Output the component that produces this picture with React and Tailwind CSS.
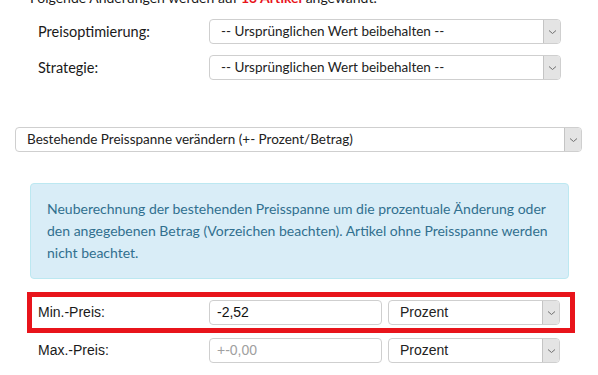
import React from 'react'

const sans = "font-['Lato','Liberation_Sans',sans-serif]"
const arial = "font-['Liberation_Sans',Arial,sans-serif]"

function Chevron() {
  return (
    <svg width="9" height="6" viewBox="0 0 9 6" fill="none">
      <path d="M1 1.5 L4.5 4.5 L8 1.5" stroke="#707070" strokeWidth="1" />
    </svg>
  )
}

function Select({ value, className = '', font = sans, size = 'text-[13.5px]' }) {
  return (
    <div className={`flex items-center h-[25px] border border-[#cfcfcf] rounded-[4px] bg-white overflow-hidden ${className}`}>
      <span className={`flex-1 pl-[11px] text-[#222] whitespace-nowrap ${size} ${font}`}>{value}</span>
      <span className="flex items-center justify-center w-[17px] h-full border-l border-[#c4c4c4] bg-[#e4e4e4]">
        <Chevron />
      </span>
    </div>
  )
}

function Input({ value, placeholder }) {
  return (
    <div className={`flex items-center w-[173px] h-[25px] border border-[#cfcfcf] rounded-[4px] bg-white pl-[7px] text-[14px] ${arial}`}>
      {value ? <span className="text-[#111]">{value}</span> : <span className="text-[#a0a0a0]">{placeholder}</span>}
    </div>
  )
}

export default function App() {
  return (
    <div className="w-[598px] h-[375px] overflow-hidden bg-white text-[#1a1a1a]">
      <p className={`-mt-[12px] pl-[30px] text-[14px] leading-[20px] whitespace-nowrap ${sans}`}>
        Folgende Änderungen werden auf <span className="font-bold text-[#e8141b]">13 Artikel</span> angewandt.
      </p>

      <div className="pl-[27px] mt-[11px] space-y-[11px]">
        <div className="flex items-center pl-[11px]">
          <span className={`w-[171px] text-[14.5px] ${sans}`}>Preisoptimierung:</span>
          <Select value="-- Ursprünglichen Wert beibehalten --" className="w-[352px]" />
        </div>
        <div className="flex items-center pl-[11px]">
          <span className={`w-[171px] text-[14.5px] ${sans}`}>Strategie:</span>
          <Select value="-- Ursprünglichen Wert beibehalten --" className="w-[352px]" />
        </div>
      </div>

      <div className="pl-[15px] mt-[47px]">
        <Select value="Bestehende Preisspanne verändern (+- Prozent/Betrag)" className="w-[567px] h-[24px]" />
      </div>

      <div className="ml-[30px] mt-[31px] w-[539px] border border-[#bce8f1] rounded-[4px] bg-[#d9edf7] px-[16px] py-[14px]">
        <p className={`text-[14px] leading-[22px] text-[#31708f] whitespace-nowrap ${sans}`}>
          Neuberechnung der bestehenden Preisspanne um die prozentuale Änderung oder
          <br />
          den angegebenen Betrag (Vorzeichen beachten). Artikel ohne Preisspanne werden
          <br />
          nicht beachtet.
        </p>
      </div>

      <div className="ml-[27px] mt-[13px] w-[548px] border-[5px] border-[#e8141b] py-[3px] pl-[6px] flex items-center">
        <span className={`w-[171px] text-[14px] ${arial}`}>Min.-Preis:</span>
        <Input value="-2,52" />
        <Select value="Prozent" font={arial} size="text-[14px]" className="ml-[6px] w-[172px]" />
      </div>

      <div className="ml-[27px] mt-[5px] pl-[11px] flex items-center">
        <span className={`w-[171px] text-[14px] ${arial}`}>Max.-Preis:</span>
        <Input placeholder="+-0,00" />
        <Select value="Prozent" font={arial} size="text-[14px]" className="ml-[6px] w-[172px]" />
      </div>
    </div>
  )
}
